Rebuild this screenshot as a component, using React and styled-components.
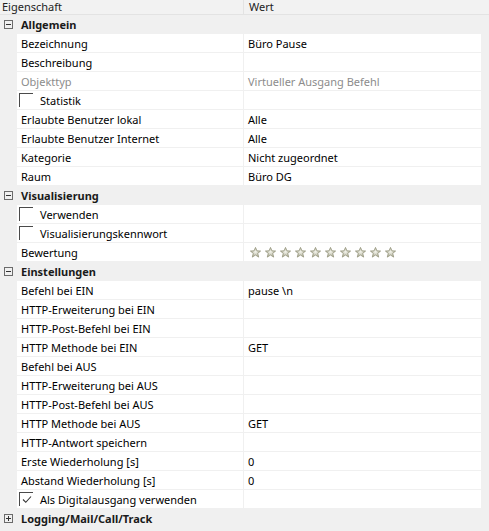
import React from 'react';
import styled, { createGlobalStyle } from 'styled-components';

const GlobalStyle = createGlobalStyle`
  html, body {
    margin: 0;
    padding: 0;
    background: #f0f0f0;
  }
  body {
    font-family: "Noto Sans", "Open Sans", sans-serif;
    font-size: 11px;
    color: #000;
  }
`;

const Grid = styled.div`
  width: 489px;
  height: 531px;
  overflow: hidden;
  background: #f0f0f0;
`;

const Header = styled.div`
  display: grid;
  grid-template-columns: 243px 1fr;
  height: 15px;
  border-bottom: 1px solid #e3e3e3;
  box-sizing: border-box;
  background: #f2f2f2;
`;

const HeaderCell = styled.div`
  line-height: 14px;
  padding-left: ${p => (p.$first ? '2px' : '5px')};
  color: #222;
  border-left: ${p => (p.$first ? 'none' : '1px solid #e3e3e3')};
  white-space: nowrap;
`;

const Row = styled.div`
  display: grid;
  grid-template-columns: 17px 226px 238px 8px;
  height: 19px;
`;

const Gutter = styled.div`
  background: #f0f0f0;
`;

const Cell = styled.div`
  background: #fff;
  border-bottom: 1px solid #f0f0f0;
  border-left: ${p => (p.$value ? '1px solid #f0f0f0' : 'none')};
  box-sizing: border-box;
  display: flex;
  align-items: center;
  gap: 7px;
  padding-left: 4px;
  white-space: nowrap;
  overflow: hidden;
  color: ${p => (p.$muted ? '#8c8c8c' : '#000')};
`;

const CategoryRow = styled.div`
  display: flex;
  align-items: center;
  height: 19px;
  background: #f0f0f0;
  font-weight: bold;
  color: #1a1a1a;
`;

const ToggleBox = styled.span`
  width: 9px;
  height: 9px;
  margin: 0 8px 0 4px;
  border: 1px solid #6b6b6b;
  box-sizing: border-box;
  position: relative;
  flex: none;

  &::before {
    content: '';
    position: absolute;
    left: 1px;
    right: 1px;
    top: 3px;
    height: 1px;
    background: #333;
  }

  &::after {
    content: '';
    display: ${p => (p.$open ? 'none' : 'block')};
    position: absolute;
    top: 1px;
    bottom: 1px;
    left: 3px;
    width: 1px;
    background: #333;
  }
`;

const Check = styled.span`
  width: 14px;
  height: 14px;
  margin-left: -2px;
  border-top: 1px solid #4a4a4a;
  border-left: 1px solid #4a4a4a;
  box-sizing: border-box;
  flex: none;
  display: flex;
  align-items: center;
  justify-content: center;
`;

const Stars = styled.div`
  display: flex;
  gap: 4px;
  padding-left: 2px;
`;

const Star = () => (
  <svg width="11" height="11" viewBox="0 0 10 10">
    <defs>
      <radialGradient id="sg" cx="50%" cy="45%" r="60%">
        <stop offset="0%" stopColor="#f4f4ec" />
        <stop offset="100%" stopColor="#a7a790" />
      </radialGradient>
    </defs>
    <path
      d="M5 0.4 L6.3 3.5 L9.6 3.7 L7 5.8 L7.9 9.2 L5 7.3 L2.1 9.2 L3 5.8 L0.4 3.7 L3.7 3.5 Z"
      fill="url(#sg)"
      stroke="#9a9a82"
      strokeWidth="0.8"
    />
  </svg>
);

const CheckMark = () => (
  <svg width="10" height="9" viewBox="0 0 10 9">
    <path d="M1 4.5 L3.8 7.3 L9 1.5" fill="none" stroke="#333" strokeWidth="1.1" />
  </svg>
);

const sections = [
  {
    title: 'Allgemein',
    open: true,
    rows: [
      { name: 'Bezeichnung', value: 'Büro Pause' },
      { name: 'Beschreibung', value: '' },
      { name: 'Objekttyp', value: 'Virtueller Ausgang Befehl', muted: true },
      { name: 'Statistik', check: false },
      { name: 'Erlaubte Benutzer lokal', value: 'Alle' },
      { name: 'Erlaubte Benutzer Internet', value: 'Alle' },
      { name: 'Kategorie', value: 'Nicht zugeordnet' },
      { name: 'Raum', value: 'Büro DG' },
    ],
  },
  {
    title: 'Visualisierung',
    open: true,
    rows: [
      { name: 'Verwenden', check: false },
      { name: 'Visualisierungskennwort', check: false },
      { name: 'Bewertung', stars: 10 },
    ],
  },
  {
    title: 'Einstellungen',
    open: true,
    rows: [
      { name: 'Befehl bei EIN', value: 'pause \\n' },
      { name: 'HTTP-Erweiterung bei EIN', value: '' },
      { name: 'HTTP-Post-Befehl bei EIN', value: '' },
      { name: 'HTTP Methode bei EIN', value: 'GET' },
      { name: 'Befehl bei AUS', value: '' },
      { name: 'HTTP-Erweiterung bei AUS', value: '' },
      { name: 'HTTP-Post-Befehl bei AUS', value: '' },
      { name: 'HTTP Methode bei AUS', value: 'GET' },
      { name: 'HTTP-Antwort speichern', value: '' },
      { name: 'Erste Wiederholung [s]', value: '0' },
      { name: 'Abstand Wiederholung [s]', value: '0' },
      { name: 'Als Digitalausgang verwenden', check: true },
    ],
  },
  {
    title: 'Logging/Mail/Call/Track',
    open: false,
    rows: [],
  },
];

function PropertyRow({ row }) {
  const hasCheck = row.check !== undefined;
  return (
    <Row>
      <Gutter />
      <Cell $muted={row.muted}>
        {hasCheck && <Check>{row.check && <CheckMark />}</Check>}
        {row.name}
      </Cell>
      <Cell $value $muted={row.muted}>
        {row.stars ? (
          <Stars>
            {Array.from({ length: row.stars }).map((_, i) => (
              <Star key={i} />
            ))}
          </Stars>
        ) : (
          row.value
        )}
      </Cell>
      <Gutter />
    </Row>
  );
}

export default function App() {
  return (
    <>
      <GlobalStyle />
      <Grid>
        <Header>
          <HeaderCell $first>Eigenschaft</HeaderCell>
          <HeaderCell>Wert</HeaderCell>
        </Header>
        {sections.map(section => (
          <React.Fragment key={section.title}>
            <CategoryRow>
              <ToggleBox $open={section.open} />
              {section.title}
            </CategoryRow>
            {section.open && section.rows.map(row => <PropertyRow key={row.name} row={row} />)}
          </React.Fragment>
        ))}
      </Grid>
    </>
  );
}
